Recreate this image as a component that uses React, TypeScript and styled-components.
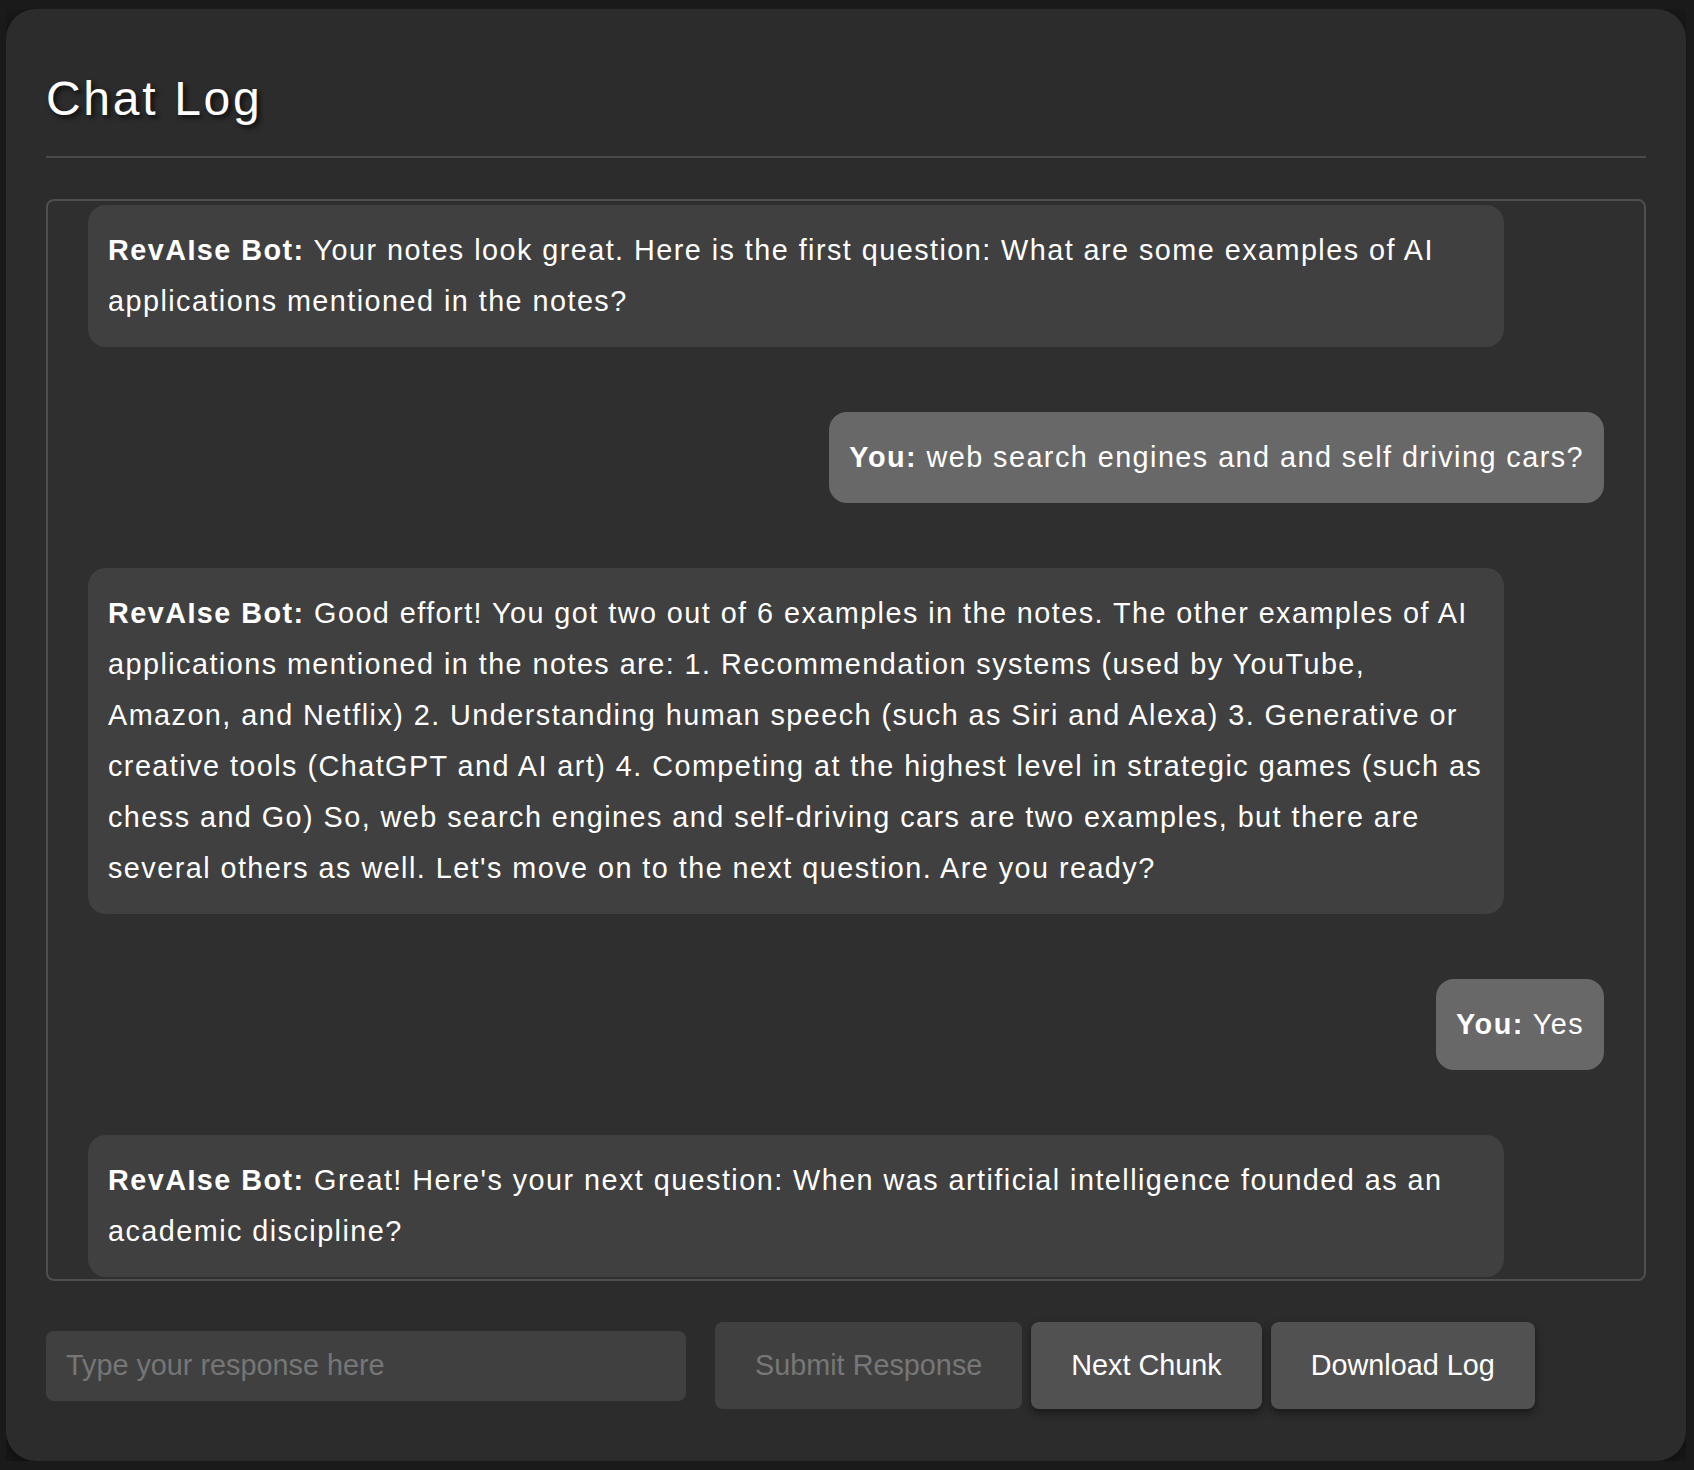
import React from "react";
import styled, { createGlobalStyle } from "styled-components";

const FONT = `"Liberation Sans", Arial, Helvetica, sans-serif`;
const TEXT_SIZE = 28.8;

const GlobalStyle = createGlobalStyle`
  body {
    margin: 9px 8px 8px 6px;
    background: #1a1a1a;
    font-family: ${FONT};
    color: #fff;
  }
  * {
    box-sizing: border-box;
  }
`;

const Card = styled.div`
  background: #2c2c2c;
  border-radius: 30px;
  padding: 40px 40px 52px;
  box-shadow: 0 6px 24px rgba(0, 0, 0, 0.55);
`;

const Title = styled.h1`
  margin: 22px 0 30px;
  font-size: 48px;
  line-height: 55px;
  font-weight: 400;
  letter-spacing: 2.7px;
  color: #fff;
  text-shadow: 3px 3px 5px rgba(0, 0, 0, 0.7);
`;

const Divider = styled.hr`
  border: none;
  border-top: 2px solid #4a4a4a;
  margin: 0 0 41px;
`;

const ChatBox = styled.div`
  height: 1082px;
  border: 2px solid #4f4f4f;
  border-radius: 8px;
  background: #2f2f2f;
  padding: 4px 40px;
  display: flex;
  flex-direction: column;
  gap: 65px;
  overflow: hidden;
`;

const Bubble = styled.div<{ $from: "bot" | "user" }>`
  padding: 20px;
  border-radius: 18px;
  font-size: ${TEXT_SIZE}px;
  line-height: 51px;
  letter-spacing: 1.45px;
  color: #fff;
  flex-shrink: 0;
  background: ${(p) => (p.$from === "bot" ? "#404040" : "#686868")};
  ${(p) =>
    p.$from === "bot"
      ? `width: calc(100% - 100px); align-self: flex-start;`
      : `max-width: calc(100% - 100px); align-self: flex-end;`}

  strong {
    font-weight: 700;
  }
`;

const Controls = styled.div`
  display: flex;
  align-items: center;
  margin-top: 41px;
  gap: 9px;
`;

const ResponseInput = styled.input`
  width: 640px;
  height: 70px;
  margin-right: 20px;
  padding: 0 20px;
  border: none;
  border-radius: 8px;
  background: #404040;
  color: #fff;
  font-family: ${FONT};
  font-size: ${TEXT_SIZE}px;
  outline: none;

  &::placeholder {
    color: #767676;
  }
`;

const ActionButton = styled.button`
  padding: 27px 40px;
  border: none;
  border-radius: 8px;
  background: #515151;
  color: #fff;
  font-family: ${FONT};
  font-size: ${TEXT_SIZE}px;
  line-height: 33px;
  box-shadow: 0 4px 8px rgba(0, 0, 0, 0.45);
  cursor: pointer;

  &:disabled {
    background: #404040;
    color: #777;
    box-shadow: none;
    cursor: default;
  }
`;

type Message = { from: "bot" | "user"; text: string };

const messages: Message[] = [
  {
    from: "bot",
    text: "Your notes look great. Here is the first question: What are some examples of AI applications mentioned in the notes?",
  },
  { from: "user", text: "web search engines and and self driving cars?" },
  {
    from: "bot",
    text: "Good effort! You got two out of 6 examples in the notes. The other examples of AI applications mentioned in the notes are: 1. Recommendation systems (used by YouTube, Amazon, and Netflix) 2. Understanding human speech (such as Siri and Alexa) 3. Generative or creative tools (ChatGPT and AI art) 4. Competing at the highest level in strategic games (such as chess and Go) So, web search engines and self-driving cars are two examples, but there are several others as well. Let's move on to the next question. Are you ready?",
  },
  { from: "user", text: "Yes" },
  {
    from: "bot",
    text: "Great! Here's your next question: When was artificial intelligence founded as an academic discipline?",
  },
];

export default function App() {
  return (
    <>
      <GlobalStyle />
      <Card>
        <Title>Chat Log</Title>
        <Divider />
        <ChatBox>
          {messages.map((m, i) => (
            <Bubble key={i} $from={m.from}>
              <strong>{m.from === "bot" ? "RevAIse Bot:" : "You:"}</strong> {m.text}
            </Bubble>
          ))}
        </ChatBox>
        <Controls>
          <ResponseInput placeholder="Type your response here" />
          <ActionButton disabled>Submit Response</ActionButton>
          <ActionButton>Next Chunk</ActionButton>
          <ActionButton>Download Log</ActionButton>
        </Controls>
      </Card>
    </>
  );
}
